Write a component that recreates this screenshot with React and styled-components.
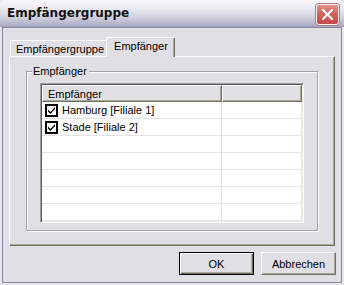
import React from "react";
import styled, { createGlobalStyle } from "styled-components";

const Global = createGlobalStyle`
  html, body { margin: 0; padding: 0; background: #ecebf0; }
  * { box-sizing: border-box; }
`;

const FONT = `"Liberation Sans", Arial, sans-serif`;

const Window = styled.div`
  width: 344px;
  height: 285px;
  display: flex;
  flex-direction: column;
  background: #e6e5ec;
  font-family: ${FONT};
  font-size: 11px;
  color: #000;
`;

const TitleBar = styled.div`
  height: 27px;
  display: flex;
  align-items: center;
  justify-content: space-between;
  padding: 0 5px 1px 7px;
  background: linear-gradient(to bottom, #f8f8fb 0%, #ebebf2 30%, #d4d4e1 60%, #b6b6cb 88%, #a3a3bd 100%);
  border-top-left-radius: 6px;
  border-top-right-radius: 6px;
`;

const Title = styled.span`
  font-family: "DejaVu Sans", Verdana, sans-serif;
  font-weight: bold;
  font-size: 12px;
  color: #111;
`;

const CloseButton = styled.div`
  width: 23px;
  height: 21px;
  margin-top: 3px;
  border: 1px solid #f7ecec;
  border-radius: 3px;
  background: linear-gradient(to bottom, #e4918a 0%, #d2645e 45%, #c24a48 100%);
  display: flex;
  align-items: center;
  justify-content: center;
  box-shadow: 0 0 0 1px #a98088;
`;

const Client = styled.div`
  flex: 1;
  margin: 0 2px 2px 2px;
  border: 1px solid #85859f;
  background: #e0dfe3;
  padding: 9px 5px 7px 6px;
  display: flex;
  flex-direction: column;
`;

const TabStrip = styled.div`
  height: 19px;
  display: flex;
  align-items: flex-end;
  padding-left: 1px;
  position: relative;
  z-index: 1;
`;

const Tab = styled.div`
  position: relative;
  height: ${(p) => (p.$active ? "20px" : "16px")};
  margin-bottom: ${(p) => (p.$active ? "-1px" : "0")};
  margin-left: ${(p) => (p.$active ? "-2px" : "0")};
  padding: ${(p) => (p.$active ? "0 6px 3px 7px" : "0 3px 0 5px")};
  display: flex;
  align-items: center;
  background: #e0dfe3;
  border-top: 1px solid #ffffff;
  border-left: 1px solid #ffffff;
  border-right: 1px solid #716f64;
  box-shadow: inset -1px 0 0 #aca899;
  border-top-left-radius: 2px;
  border-top-right-radius: 2px;
  white-space: nowrap;
`;

const TabPanel = styled.div`
  height: 190px;
  margin-right: 1px;
  border-top: 1px solid #ffffff;
  border-left: 1px solid #ffffff;
  border-right: 1px solid #716f64;
  border-bottom: 1px solid #716f64;
  box-shadow: inset -1px -1px 0 #aca899;
  padding: 14px 16px 14px 16px;
`;

const GroupBox = styled.div`
  position: relative;
  height: 160px;
  border: 1px solid #a3a3a8;
  box-shadow: inset 1px 1px 0 #ffffff, 1px 1px 0 #ffffff;
  padding: 11px 13px 7px 13px;
`;

const GroupLabel = styled.span`
  position: absolute;
  top: -7px;
  left: 5px;
  padding: 0 2px 0 1px;
  line-height: 13px;
  background: #e0dfe3;
`;

const ListView = styled.div`
  height: 140px;
  border-top: 1px solid #9d9da1;
  border-left: 1px solid #9d9da1;
  border-right: 1px solid #ffffff;
  border-bottom: 1px solid #ffffff;
  box-shadow: inset 1px 1px 0 #5a5a5a, inset -1px -1px 0 #f1efe2;
  padding: 1px;
  background: #ffffff;
  display: flex;
  flex-direction: column;
  overflow: hidden;
`;

const Row = styled.div`
  display: flex;
  height: 17px;
  flex-shrink: 0;
`;

const HeaderCell = styled.div`
  width: ${(p) => (p.$w ? `${p.$w}px` : "auto")};
  flex: ${(p) => (p.$w ? "none" : "1")};
  height: 17px;
  display: flex;
  align-items: center;
  padding-left: 5px;
  background: #e0dfe3;
  border-top: 1px solid #ffffff;
  border-left: 1px solid #ffffff;
  border-right: 1px solid #716f64;
  border-bottom: 1px solid #716f64;
  box-shadow: inset -1px -1px 0 #aca899;
`;

const Cell = styled.div`
  width: ${(p) => (p.$w ? `${p.$w}px` : "auto")};
  flex: ${(p) => (p.$w ? "none" : "1")};
  height: 17px;
  display: flex;
  align-items: center;
  gap: 4px;
  padding-left: 3px;
  border-bottom: 1px solid #e3e3e3;
  border-right: 1px solid #e3e3e3;
  white-space: nowrap;
`;

const CheckBox = styled.span`
  width: 13px;
  height: 13px;
  border: 2px solid #000;
  background: #fff;
  display: inline-flex;
  align-items: center;
  justify-content: center;
  flex-shrink: 0;
`;

const ButtonRow = styled.div`
  display: flex;
  justify-content: flex-end;
  gap: 7px;
  margin-top: 6px;
`;

const Button = styled.div`
  width: 75px;
  height: 23px;
  display: flex;
  align-items: center;
  justify-content: center;
  background: #e0dfe3;
  border: 1px solid;
  border-color: ${(p) => (p.$default ? "#000" : "#ffffff #716f64 #716f64 #ffffff")};
  box-shadow: ${(p) =>
    p.$default
      ? "inset 1px 1px 0 #ffffff, inset -1px -1px 0 #716f64, inset -2px -2px 0 #aca899"
      : "inset -1px -1px 0 #aca899"};
`;

const recipients = ["Hamburg [Filiale 1]", "Stade [Filiale 2]", "", "", "", "", ""];

function Check() {
  return (
    <svg width="9" height="9" viewBox="0 0 9 9">
      <path d="M1 3.5 L1 5.5 L3.5 8 L8 3 L8 1 L3.5 6 Z" fill="#000" />
    </svg>
  );
}

export default function App() {
  return (
    <>
      <Global />
      <Window>
        <TitleBar>
          <Title>Empfängergruppe</Title>
          <CloseButton>
            <svg width="11" height="11" viewBox="0 0 11 11">
              <path d="M1 1 L10 10 M10 1 L1 10" stroke="#fff" strokeWidth="2" strokeLinecap="square" />
            </svg>
          </CloseButton>
        </TitleBar>
        <Client>
          <TabStrip>
            <Tab>Empfängergruppe</Tab>
            <Tab $active>Empfänger</Tab>
          </TabStrip>
          <TabPanel>
            <GroupBox>
              <GroupLabel>Empfänger</GroupLabel>
              <ListView>
                <Row>
                  <HeaderCell $w={180}>Empfänger</HeaderCell>
                  <HeaderCell />
                </Row>
                {recipients.map((name, i) => (
                  <Row key={i}>
                    <Cell $w={180}>
                      {name && (
                        <>
                          <CheckBox>
                            <Check />
                          </CheckBox>
                          <span>{name}</span>
                        </>
                      )}
                    </Cell>
                    <Cell />
                  </Row>
                ))}
              </ListView>
            </GroupBox>
          </TabPanel>
          <ButtonRow>
            <Button $default>OK</Button>
            <Button>Abbrechen</Button>
          </ButtonRow>
        </Client>
      </Window>
    </>
  );
}
